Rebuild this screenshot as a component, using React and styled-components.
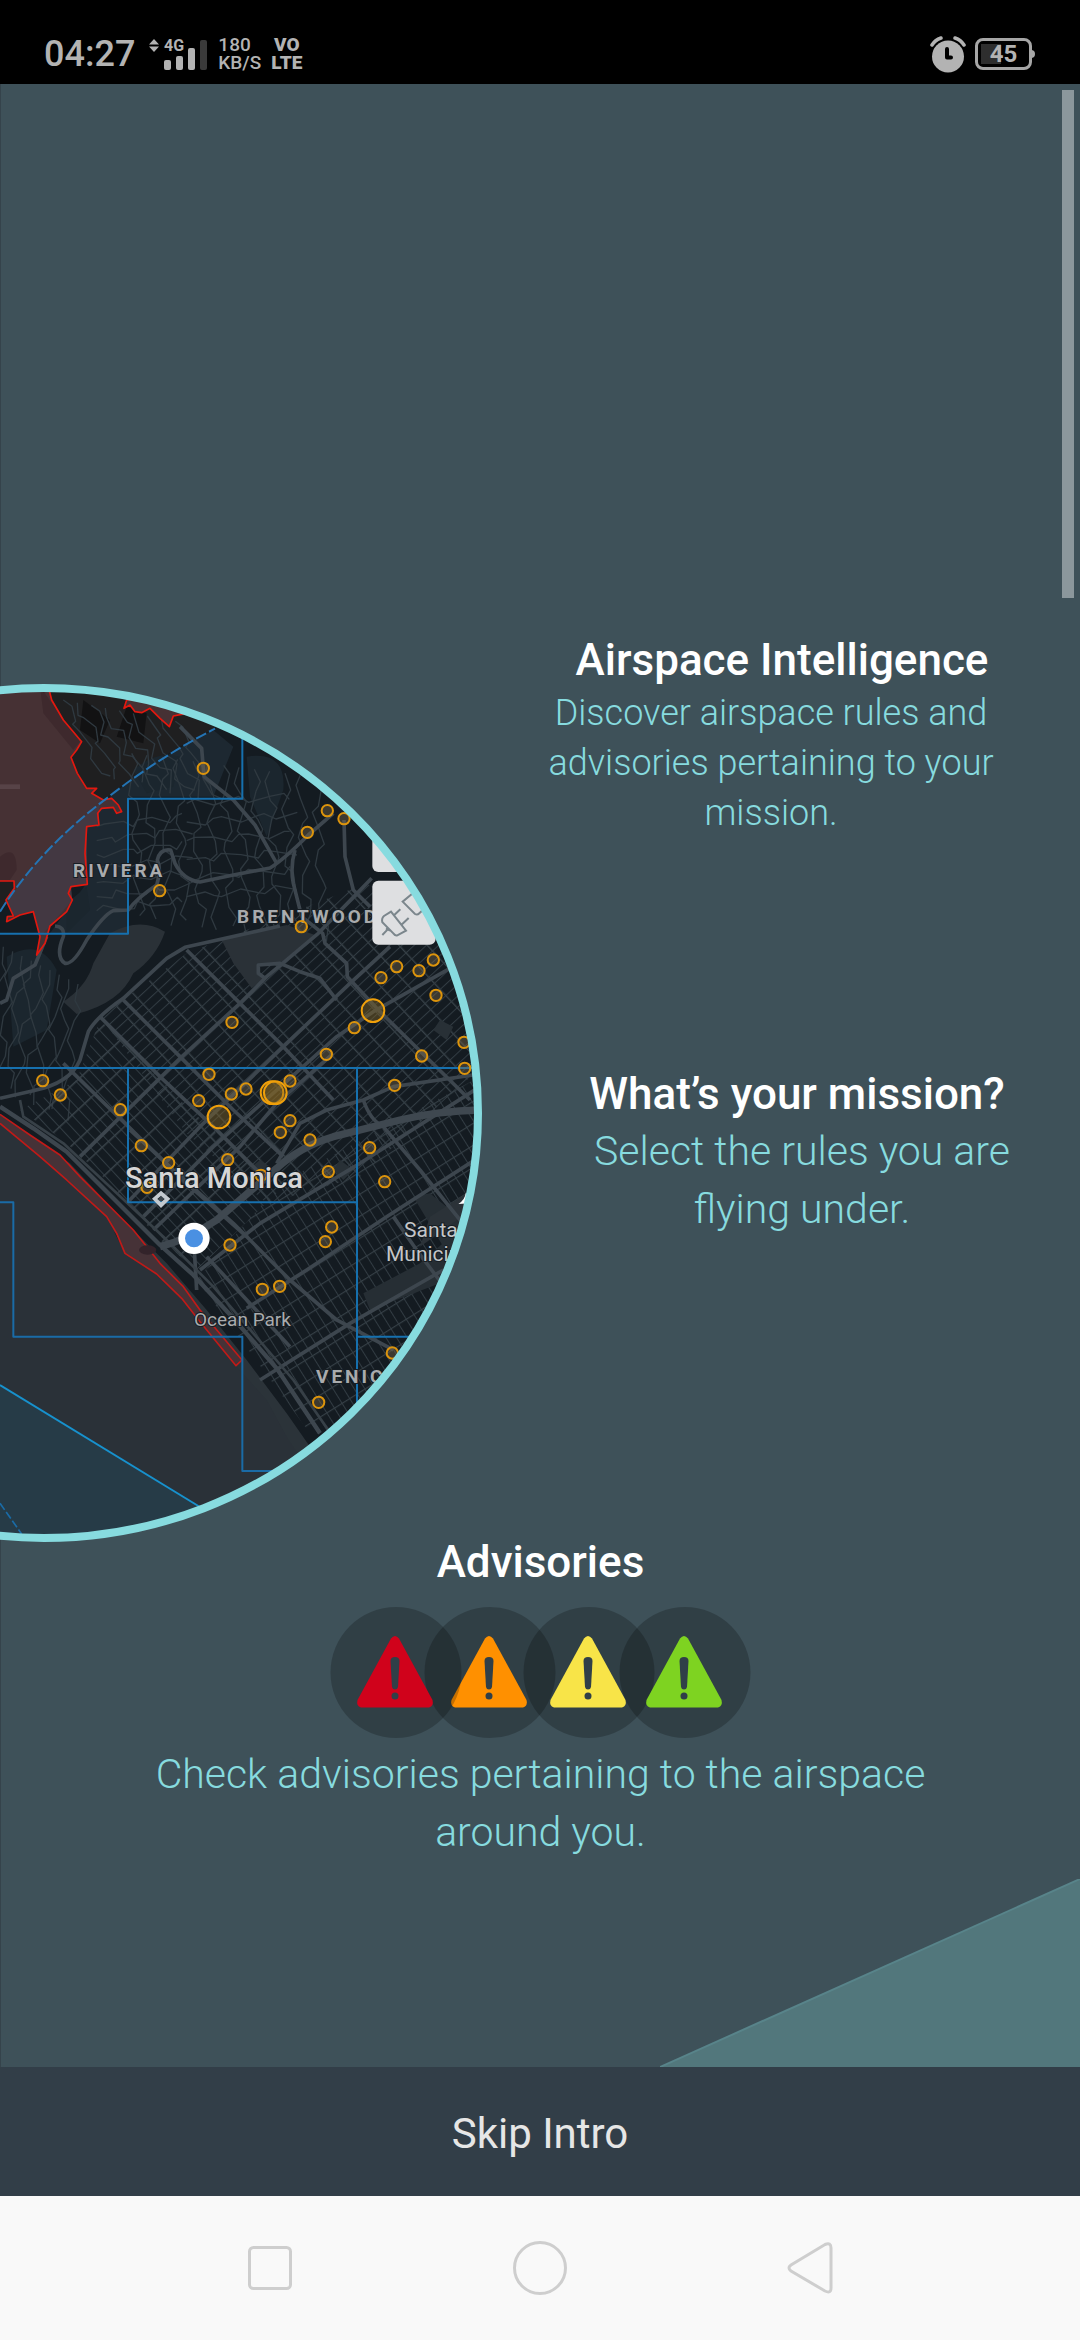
import React from "react";
import styled, { createGlobalStyle } from "styled-components";

const GlobalStyle = createGlobalStyle`
  * { box-sizing: border-box; }
  body { margin: 0; background: #3e5159; }
`;

const Page = styled.div`
  display: flex;
  flex-direction: column;
  min-height: 100vh;
  overflow: hidden;
  font-family: Roboto, "Liberation Sans", sans-serif;
`;

/* ---------- status bar ---------- */

const StatusBar = styled.header`
  display: flex;
  align-items: flex-end;
  justify-content: space-between;
  height: 84px;
  padding: 0 48px 12px 44px;
  background: #000;
  color: #b3b3b3;
`;

const StatusGroup = styled.div`
  display: flex;
  align-items: center;
  height: 36px;
  gap: ${(p) => p.$gap}px;
`;

const Clock = styled.time`
  font-size: 36px;
  line-height: 36px;
  font-weight: 500;
  margin-right: 4px;
`;

const Stack = styled.div`
  display: flex;
  flex-direction: column;
  align-items: ${(p) => p.$align};
  font-size: 19px;
  line-height: 18px;
  font-weight: ${(p) => p.$weight};
`;

const Svg = styled.svg`
  display: block;
  flex: none;
`;

const Battery = styled.div`
  display: flex;
  align-items: center;
  justify-content: center;
  position: relative;
  width: 57px;
  height: 32px;
  border: 3px solid #a6a6a6;
  border-radius: 8px;
  background: linear-gradient(#2e2e2e, #2e2e2e) 3px 3px / 20px 20px no-repeat;
  font-size: 24px;
  line-height: 24px;
  font-weight: 700;

  &::after {
    content: "";
    position: absolute;
    right: -6px;
    top: 9px;
    width: 4px;
    height: 8px;
    border-radius: 0 4px 4px 0;
    background: #a6a6a6;
  }
`;

/* ---------- intro ---------- */

const Intro = styled.main`
  position: relative;
  flex: 1;
  background: #3e5159;
  border-left: 1px solid #35434b;
`;

const Hero = styled.div`
  display: flex;
  align-items: flex-start;
  height: 1450px;
`;

const MapFigure = styled.figure`
  flex: none;
  margin: 600px 0 0 -1px;
`;

const Copy = styled.div`
  flex: 1;
  min-width: 0;
  padding-top: 548px;
`;

const Feature = styled.section`
  padding-left: ${(p) => p.$indent || 0}px;
  margin-bottom: 228px;
  text-align: center;
`;

const Title = styled.h2`
  margin: 0;
  color: #fff;
  font-size: 44px;
  line-height: 56px;
  font-weight: 500;
`;

const Body = styled.p`
  margin: 0;
  padding: 0 ${(p) => p.$right}px 0 ${(p) => p.$left}px;
  color: #87dbdf;
  font-weight: 300;
  font-size: ${(p) => (p.$small ? 36 : 41)}px;
  line-height: ${(p) => (p.$small ? 50 : 58)}px;
`;

const Advisories = styled.section`
  display: flex;
  flex-direction: column;
  align-items: center;
  text-align: center;
`;

const Badges = styled(Svg)`
  margin: 17px 0 7px;
`;

const Corner = styled(Svg)`
  position: absolute;
  right: 0;
  bottom: 0;
`;

const ScrollThumb = styled.div`
  position: absolute;
  top: 6px;
  right: 6px;
  width: 12px;
  height: 508px;
  background: #8b979c;
`;

const SkipButton = styled.button`
  height: 129px;
  border: 0;
  padding: 4px 0 0;
  background: #323e48;
  color: #e6e6e6;
  font: 400 42px/48px Roboto, "Liberation Sans", sans-serif;
`;

/* ---------- system navigation ---------- */

const NavBar = styled.nav`
  display: grid;
  grid-template-columns: repeat(3, 1fr);
  height: 144px;
  padding: 0 12.5%;
  background: #f9f9f9;
`;

const NavButton = styled.button`
  display: flex;
  align-items: center;
  justify-content: center;
  border: 0;
  padding: 0;
  background: none;
`;

/* ---------- map ---------- */

const MapLabel = styled.text`
  font-family: Roboto, "Liberation Sans", sans-serif;
  font-size: ${(p) => p.$size}px;
  font-weight: ${(p) => p.$weight || 400};
  letter-spacing: ${(p) => (p.$caps ? 3 : 0)}px;
  fill: ${(p) => p.$fill || "#a9abad"};
  stroke: #161d23;
  stroke-width: 2px;
  paint-order: stroke;
`;

const SITES = [
  [610, 295], [982, 422], [1032, 446], [922, 487], [479, 662], [904, 770], [1143, 923], [1190, 890],
  [1257, 902], [1300, 870], [1308, 976], [1063, 1073], [979, 1153], [1265, 1158], [1392, 1117],
  [1394, 1195], [696, 1057], [128, 1232], [181, 1275], [627, 1213], [596, 1292], [694, 1272],
  [738, 1257], [870, 1233], [1184, 1246], [361, 1319], [424, 1427], [506, 1478], [683, 1469],
  [783, 1516], [441, 1552], [870, 1352], [841, 1387], [930, 1410], [1109, 1433], [985, 1505],
  [1154, 1535], [995, 1671], [976, 1715], [690, 1725], [787, 1858], [839, 1849], [1177, 2049],
  [956, 2197],
];

const CLUSTERS = [[1119, 1022], [657, 1341], [816, 1268], [826, 1268]];

const MAJOR_ROADS = [
  "M0 1285 L100 1262 Q210 1240 240 1170 L265 1085 Q290 1040 370 985 L500 865 L555 832 L840 768",
  "M0 1000 L20 990 L40 925 L105 885 L140 800",
  "M165 768 Q195 770 190 800 Q165 860 195 880 Q220 885 260 810 Q310 735 340 722 L385 720 Q410 685 470 645 Q485 600 472 570 Q480 535 512 540 L525 580 Q550 630 600 636 L700 615 L810 594 Q850 570 925 495 L1000 430",
  "M540 170 L605 235 L612 320 L700 390 L765 465 L830 580",
  "M885 540 Q870 590 880 640 L905 740 L968 790 L975 820 L1040 880 L1042 920 L1140 1025 L1410 1290",
  "M1032 450 L1035 560 L1060 660 L1110 710",
  "M240 1460 L540 1165 L720 1000 L800 920 L955 790 L1115 625",
  "M795 925 L775 910 L775 885 L840 880 L900 905 L960 925 L1010 990",
  "M380 1600 L600 1370 L850 1130 L1050 940 L1170 830",
  "M430 1640 L640 1430 L920 1180 L1010 1100 L1120 1025 L1350 895",
  "M460 1680 L720 1430 L830 1300 L1000 1150",
  "M830 1480 L900 1360 L980 1320 L1090 1290 L1180 1250 L1420 1215",
  "M560 840 L720 1000 L850 1130 L1000 1290",
  "M370 990 L540 1160 L700 1320 L850 1460",
  "M300 1040 L480 1220 L640 1370 L800 1530",
  "M190 1180 L380 1365 L560 1540 L740 1700",
  "M600 1800 L780 1660 L1080 1480 L1440 1250",
  "M740 1915 L920 1800 L1160 1640 L1440 1460",
  "M780 2130 L1050 1960 L1330 1800",
  "M390 1380 L520 1500 L700 1660 L870 1830 L1010 1950 L1180 2040",
  "M1090 1290 Q1110 1350 1150 1370 L1260 1500 L1420 1700",
  "M1180 1640 L1250 1740 L1340 1860",
  "M580 1690 L590 1860",
  "M620 1760 L870 2030",
];

const wave = (x, y, dx, dy, n, seed) => {
  let d = `M${x} ${y}`;
  for (let i = 1; i <= n; i += 1) {
    const jx = Math.round(Math.sin(seed * 3.1 + i * 1.7) * 16);
    const jy = Math.round(Math.cos(seed * 2.3 + i * 2.1) * 12);
    d += ` L${x + dx * i + jx} ${y + dy * i + jy}`;
  }
  return d;
};

const HILL_LANES = [
  ...Array.from({ length: 13 }, (_, i) => wave(395 + i * 46, 250 + i * 6, 2, 38, 13, i)),
  ...Array.from({ length: 9 }, (_, i) => wave(190 + i * 42, 90 + i * 8, 14, 26, 9, i + 20)),
  ...Array.from({ length: 9 }, (_, i) => wave(10 + i * 28, 830 + i * 14, -4, 40, 10, i + 40)),
  ...Array.from({ length: 7 }, (_, i) => wave(290, 470 + i * 42, 34, -4, 8, i + 60)),
  ...Array.from({ length: 6 }, (_, i) => wave(560, 400 + i * 56, 40, -3, 8, i + 80)),
];

function MapDrawing() {
  return (
    <Svg width="484" height="858" viewBox="0 684 484 858" role="img" aria-label="Map of Santa Monica airspace">
      <defs>
        <clipPath id="lens">
          <ellipse cx="44" cy="1113" rx="435" ry="426" />
        </clipPath>
        <pattern id="blocks" width="62" height="25" patternUnits="userSpaceOnUse" patternTransform="rotate(-43)">
          <path d="M0 0 V25" stroke="#384249" strokeWidth="8" />
          <path d="M0 0 H62" stroke="#323c43" strokeWidth="6" />
        </pattern>
        <pattern id="blocksWest" width="26" height="66" patternUnits="userSpaceOnUse" patternTransform="rotate(-43)">
          <path d="M0 0 V66" stroke="#323c43" strokeWidth="6" />
          <path d="M0 0 H26" stroke="#39434a" strokeWidth="9" />
        </pattern>
        <pattern id="blocksSouth" width="27" height="56" patternUnits="userSpaceOnUse" patternTransform="rotate(-32)">
          <path d="M0 0 V56" stroke="#323c43" strokeWidth="6" />
          <path d="M0 0 H27" stroke="#353f46" strokeWidth="7" />
        </pattern>
      </defs>
      <g clipPath="url(#lens)">
        <rect x="0" y="684" width="484" height="858" fill="#141b21" />
        <g transform="translate(0 670) scale(0.33333)" fill="none" strokeLinejoin="round">
          <path d="M0 30 H760 L640 178 Q460 265 320 385 Q120 540 0 725 Z" fill="#1f1f20" />
          <path d="M380 110 L440 130 L430 220 L350 200 Z M250 90 L330 150 L300 220 L240 180 Z" fill="#121213" />
          <path d="M330 380 Q460 270 640 180 L700 230 L640 380 H385 V790 H150 L260 640 L260 470 Z" fill="#1d2831" />
          <path d="M400 300 Q470 240 540 260 L520 350 L440 370 Z M740 260 Q860 240 850 360 L800 500 L750 380 Z M20 860 Q120 800 170 900 L140 1080 L40 1130 Z M200 700 L260 650 L270 720 L200 790 Z" fill="#1b262e" />
          <path d="M330 790 Q420 740 495 785 Q470 860 400 910 Q360 1000 230 1032 L190 995 Q260 950 280 880 Z" fill="#2a3137" />
          {HILL_LANES.map((d) => (
            <path key={d} d={d} stroke="#2f3940" strokeWidth="4" />
          ))}
          <path d="M560 850 L1100 640 L1440 880 V1194 L1080 1520 L800 1600 L560 1390 L300 1040 Z" fill="url(#blocks)" />
          <path d="M300 1050 L560 1310 L840 1560 L590 1800 L480 1710 L330 1540 L190 1410 L60 1320 L230 1230 Z" fill="url(#blocksWest)" />
          <path d="M840 1540 L1440 1220 V1900 L1040 2300 L930 2290 L590 1830 Z" fill="url(#blocksSouth)" />
          <path d="M665 810 L860 765 L945 795 L840 880 L775 885 L770 915 L795 925 L755 955 L700 880 Z" fill="#2a3137" />
          <path d="M1320 1050 L1360 1070 L1340 1110 L1300 1080 Z M780 1470 L810 1490 L780 1520 L750 1495 Z M1020 1470 L1060 1500 L1030 1530 L1000 1500 Z" fill="#283036" />
          <path d="M1090 1870 L1260 1780 L1420 1640 L1440 1700 L1320 1840 L1110 1920 Z M1240 1580 L1290 1570 L1400 1660 L1330 1730 Z" fill="#262e34" />
          <path d="M1290 1640 L1400 1570 L1440 1600 L1260 1730 Z" fill="#2b3238" />
          <path d="M0 1340 L100 1410 L210 1480 L360 1640 L500 1780 L620 1920 L740 2070 L860 2230 L930 2330 L880 2360 L700 2100 L540 1900 L300 1640 L0 1380 Z" fill="#2b3339" />
          {MAJOR_ROADS.map((d) => (
            <path key={d} d={d} stroke="#3d464e" strokeWidth="11" />
          ))}
          <path d="M0 1310 L100 1375 L200 1445 L330 1575 L480 1725 L580 1815 L700 1945 L830 2095 L960 2290" stroke="#3d464e" strokeWidth="13" />
          <path d="M60 1290 L70 1340 L190 1420 L340 1560 L490 1700 L640 1850 L760 1990 L880 2130 L985 2280" stroke="#374047" strokeWidth="8" />
          <path d="M480 1730 Q560 1710 650 1650 L830 1495 Q900 1430 1000 1400 L1200 1350 Q1320 1322 1440 1320" stroke="#3f4850" strokeWidth="22" />
          <path d="M0 1360 L120 1460 L200 1530 L320 1640 L375 1750 L470 1812 L545 1885 L600 1955 L710 2090 L800 2190 L860 2300 L890 2345 L960 2620 H0 Z" fill="#2a3138" />
          <path d="M0 2145 L595 2508 L400 2640 H0 Z" fill="#263b47" />

          <path d="M0 30 H140 L155 90 L190 150 L245 215 L230 240 L213 262 L232 310 L260 355 L290 355 L275 370 L310 390 L335 385 L355 405 L365 425 L350 430 L340 412 L305 415 L293 430 L297 465 L260 470 L255 550 L262 643 L213 650 L205 670 L217 690 L200 725 L150 768 L135 820 L110 855 L120 800 L100 725 L60 735 L20 755 L22 740 L40 738 L18 690 L43 655 L42 633 H0 Z" fill="#463134" />
          <path d="M0 725 Q130 535 300 400 L293 465 L260 470 L262 643 L213 650 L217 690 L150 768 L120 800 L100 725 L40 738 L18 690 Z" fill="#433842" />
          <path d="M0 350 H60" stroke="#574347" strokeWidth="14" />
          <path d="M0 560 Q50 520 50 600 L30 630 H0 Z M120 50 L240 215 L220 240 L130 130 Z" fill="#3a272b" opacity="0.7" />
          <path d="M140 30 L155 90 L190 150 L245 215 L230 240 L213 262 L232 310 L260 355 L290 355 L275 370 L310 390 L335 385 L355 405 L365 425 L350 430 L340 412 L305 415 L293 430 L297 465 L260 470 L255 550 L262 643 L213 650 L205 670 L217 690 L200 725 L150 768 L135 820 L110 855 L120 800 L100 725 L60 735 L20 755 L22 740 L40 738 L18 690 L43 655 L42 633 H0" stroke="#e2180f" strokeWidth="5" />
          <path d="M380 90 L372 115 L390 105 L405 125 L425 128 L450 115 L480 145 L508 170 L520 138 L560 130 L520 80 Z" fill="#463134" stroke="#e2180f" strokeWidth="5" />
          <path d="M0 1333 L90 1395 L180 1455 L240 1520 L400 1680 L480 1780 L550 1850 L600 1920 L726 2070 L708 2087 L600 1955 L545 1885 L470 1812 L375 1750 L350 1690 L320 1640 L200 1530 L120 1460 L0 1360" fill="#463237" stroke="#c01a18" strokeWidth="5" />
          <ellipse cx="443" cy="1740" rx="26" ry="14" fill="#33232a" />

          <path d="M0 791 H384 V386 H727 V190 M0 1194 H1430 M384 1194 V1597 H1070 M1071 1194 V2210 M1071 2000 H1250" stroke="#1670ae" strokeWidth="6" />
          <path d="M0 1597 H40 V2000 H727 V2403 H830" stroke="#1a6ba6" strokeWidth="6" />
          <path d="M0 2145 L600 2511" stroke="#1791cd" strokeWidth="6" />
          <path d="M0 725 Q120 535 320 385 Q480 260 645 176" stroke="#2474b4" strokeWidth="6" strokeDasharray="34 10" />
          <path d="M0 2500 L65 2592" stroke="#1a6ba6" strokeWidth="5" strokeDasharray="24 8" />
        </g>

        <MapLabel x="73" y="877" $size={19} $weight={700} $caps>RIVIERA</MapLabel>
        <MapLabel x="237" y="923" $size={19} $weight={700} $caps>BRENTWOOD</MapLabel>

        <g transform="translate(0 670) scale(0.33333)" fill="none">
          {SITES.map(([x, y]) => (
            <circle key={`${x}-${y}`} cx={x} cy={y} r="17" fill="#8a744a" fillOpacity="0.35" stroke="#dc940c" strokeWidth="6" />
          ))}
          {CLUSTERS.map(([x, y]) => (
            <circle key={`${x}-${y}`} cx={x} cy={y} r="34" fill="#8a6a24" fillOpacity="0.4" stroke="#f0a00a" strokeWidth="6" />
          ))}
          <rect x="1117" y="430" width="190" height="176" rx="18" fill="#dedfe1" />
          <rect x="1117" y="632" width="190" height="192" rx="18" fill="#dedfe1" />
          <g stroke="#7b868c" strokeWidth="6">
            <path d="M1147 795 L1166 775 M1158 775 L1170 782 M1147 757 Q1144 745 1152 738 L1173 725 L1218 782 L1192 796 Q1186 798 1180 790 Z M1182 736 L1201 718 M1206 763 L1226 744" />
            <path d="M1240 668 L1208 695 L1245 732 Q1252 736 1258 730 L1290 700" />
          </g>
          <path d="M483 1562 L511 1586 L483 1614 L456 1586 Z M483 1577 L472 1587 L483 1597 L494 1587 Z" fill="#c3c9cf" fillRule="evenodd" />
          <circle cx="582" cy="1705" r="37" fill="#4a90e2" stroke="#fff" strokeWidth="20" />
          <path d="M1375 1602 Q1395 1590 1397 1570 L1410 1575 V1600 Z" fill="#fff" />
        </g>

        <MapLabel x="125" y="1188" $size={29} $weight={500} $fill="#d6d6d6">Santa Monica</MapLabel>
        <MapLabel x="404" y="1237" $size={21} $fill="#c4c6c8">Santa</MapLabel>
        <MapLabel x="386" y="1261" $size={21} $fill="#c4c6c8">Municipal</MapLabel>
        <MapLabel x="194" y="1326" $size={19}>Ocean Park</MapLabel>
        <MapLabel x="316" y="1383" $size={19} $weight={700} $caps>VENICE</MapLabel>
      </g>
      <ellipse cx="44" cy="1113" rx="434" ry="425" fill="none" stroke="#87dbdf" strokeWidth="8" />
    </Svg>
  );
}

const LEVELS = [
  { x: 160, color: "#ff9000" },
  { x: 66, color: "#d0021b" },
  { x: 259, color: "#f8e448" },
  { x: 355, color: "#7ed321" },
];

function AdvisoryBadges() {
  return (
    <Badges width="422" height="131" viewBox="0 0 422 131" role="img" aria-label="Four advisory levels">
      {LEVELS.map(({ x, color }) => (
        <g key={color} transform={`translate(${x} 0)`}>
          <circle cx="0" cy="65.5" r="65.5" fill="#000" fillOpacity="0.22" />
          <path d="M-5 31.5 Q-1 26.5 3 31.5 L36.500 93 Q38 99 33 100.500 H-35 Q-40 99 -38.500 93 Z" fill={color} />
          <path d="M-5.500 54 Q-5.500 50 -1 50 Q3.500 50 3.500 54 L2 80 Q1.500 82.500 -1 82.500 Q-3.500 82.500 -4 80 Z" fill="#303f48" />
          <circle cx="-1" cy="89" r="3.500" fill="#303f48" />
        </g>
      ))}
    </Badges>
  );
}

export default function App() {
  return (
    <Page>
      <GlobalStyle />
      <StatusBar>
        <StatusGroup $gap={10}>
          <Clock>04:27</Clock>
          <Svg width="59" height="36" viewBox="0 0 59 36" fill="#b3b3b3" role="img" aria-label="4G signal">
            <path d="M5 3 L10 8.500 H0 Z M0 10.500 H10 L5 16 Z" />
            <text x="15" y="15" fontSize="16" fontWeight="700" fontFamily="Roboto, sans-serif">4G</text>
            <rect x="15" y="24" width="7" height="10" rx="2" />
            <rect x="27" y="20" width="7" height="14" rx="2" />
            <rect x="39" y="12" width="7" height="22" rx="2" />
            <rect x="51" y="4" width="7" height="30" rx="2" fill="#3a3a3a" />
          </Svg>
          <Stack $align="flex-start" $weight={500}>
            <span>180</span>
            <span>KB/S</span>
          </Stack>
          <Stack $align="center" $weight={900}>
            <span>VO</span>
            <span>LTE</span>
          </Stack>
        </StatusGroup>
        <StatusGroup $gap={9}>
          <Svg width="36" height="37" viewBox="0 0 36 37" role="img" aria-label="Alarm set">
            <circle cx="18" cy="20.500" r="16" fill="#b3b3b3" />
            <path d="M2 9 Q5 4 11 2 M34 9 Q31 4 25 2" fill="none" stroke="#b3b3b3" strokeWidth="3.500" strokeLinecap="round" />
            <path d="M17 13 V21.500 H21" fill="none" stroke="#000" strokeWidth="4" strokeLinecap="round" strokeLinejoin="round" />
          </Svg>
          <Battery>45</Battery>
        </StatusGroup>
      </StatusBar>

      <Intro>
        <Hero>
          <MapFigure>
            <MapDrawing />
          </MapFigure>
          <Copy>
            <Feature>
              <Title>Airspace Intelligence</Title>
              <Body $small $left={50} $right={72}>
                Discover airspace rules and advisories pertaining to your mission.
              </Body>
            </Feature>
            <Feature $indent={30}>
              <Title>What’s your mission?</Title>
              <Body $left={64} $right={54}>Select the rules you are flying under.</Body>
            </Feature>
          </Copy>
        </Hero>
        <Advisories>
          <Title>Advisories</Title>
          <AdvisoryBadges />
          <Body $left={130} $right={130}>Check advisories pertaining to the airspace around you.</Body>
        </Advisories>
        <Corner width="420" height="188" viewBox="0 0 420 188" aria-hidden="true">
          <path d="M0 188 L420 0 V188 Z" fill="#52777c" />
          <path d="M0 188 L420 0" stroke="#58848a" strokeWidth="2" />
        </Corner>
        <ScrollThumb />
      </Intro>

      <SkipButton type="button">Skip Intro</SkipButton>

      <NavBar aria-label="System">
        <NavButton type="button" aria-label="Recent apps">
          <Svg width="44" height="44" viewBox="0 0 44 44">
            <rect x="1.500" y="1.500" width="41" height="41" rx="4" fill="none" stroke="#cecece" strokeWidth="3" />
          </Svg>
        </NavButton>
        <NavButton type="button" aria-label="Home">
          <Svg width="54" height="54" viewBox="0 0 54 54">
            <circle cx="27" cy="27" r="25.500" fill="none" stroke="#cecece" strokeWidth="3" />
          </Svg>
        </NavButton>
        <NavButton type="button" aria-label="Back">
          <Svg width="46" height="52" viewBox="0 0 46 52">
            <path d="M38 2.500 Q44 0 44 6 V46 Q44 52 38 49 L4 29 Q0 26 4 23 Z" fill="none" stroke="#cecece" strokeWidth="3" />
          </Svg>
        </NavButton>
      </NavBar>
    </Page>
  );
}
